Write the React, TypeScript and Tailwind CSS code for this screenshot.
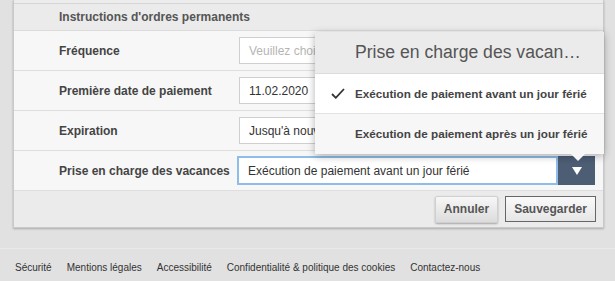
import React from "react";

const rows = [
  { label: "Fréquence", value: "Veuillez choisir", placeholder: true },
  { label: "Première date de paiement", value: "11.02.2020" },
  { label: "Expiration", value: "Jusqu'à nouvel ordre" },
];

const links = [
  "Sécurité",
  "Mentions légales",
  "Accessibilité",
  "Confidentialité & politique des cookies",
  "Contactez-nous",
];

export default function App() {
  return (
    <div className="relative w-[615px] h-[281px] overflow-hidden bg-[#e1e1e1] font-['Liberation_Sans',Arial,sans-serif] text-[#444]">
      <div className="ml-[13px] w-[591px] bg-[#f7f7f7] border-l border-r border-b border-[#c9c9c9] shadow-[0_1px_2px_rgba(0,0,0,0.25)]">
        <div className="h-[4px] bg-[#ececec] border-b border-[#d6d6d6]" />
        <div className="h-[27px] bg-[#ebebeb] border-b border-[#dcdcdc] pl-[45px] flex items-center text-[12px] font-bold text-[#555]">
          Instructions d'ordres permanents
        </div>
        {rows.map((r) => (
          <div
            key={r.label}
            className="h-[40px] border-b border-[#dedede] flex items-center"
          >
            <div className="w-[225px] pl-[45px] text-[12px] font-bold text-[#444]">
              {r.label}
            </div>
            <div
              className={
                "w-[356px] h-[27px] bg-white border border-[#cfcfcf] flex items-center px-[9px] text-[12px] whitespace-nowrap overflow-hidden " +
                (r.placeholder ? "text-[#b5b5b5]" : "text-[#333]")
              }
            >
              {r.value}
            </div>
          </div>
        ))}
        <div className="h-[40px] border-b border-[#dedede] flex items-center">
          <div className="w-[223px] pl-[45px] text-[12px] font-bold text-[#444]">
            Prise en charge des vacances
          </div>
          <div className="flex h-[29px]">
            <div className="w-[321px] h-[29px] bg-white border-2 border-[#8fbdea] flex items-center px-[9px] text-[12px] text-[#333] whitespace-nowrap">
              Exécution de paiement avant un jour férié
            </div>
            <div className="w-[37px] h-[29px] bg-[#4c5d74] flex items-center justify-center">
              <svg width="10" height="8" viewBox="0 0 10 8">
                <path d="M0 0 L10 0 L5 8 Z" fill="#fff" />
              </svg>
            </div>
          </div>
        </div>
        <div className="h-[36px] bg-[#ebebeb] flex items-center justify-end gap-[7px] pr-[7px]">
          <button className="w-[63px] h-[27px] rounded-[2px] border border-[#d0d0d0] bg-gradient-to-b from-[#f7f7f7] to-[#dcdcdc] shadow-[0_1px_2px_rgba(0,0,0,0.3)] text-[12px] font-bold text-[#555]">
            Annuler
          </button>
          <button className="w-[91px] h-[26px] border border-[#666] bg-gradient-to-b from-[#fafafa] to-[#e6e6e6] text-[12px] font-bold text-[#555]">
            Sauvegarder
          </button>
        </div>
      </div>

      <div className="mt-[20px] border-t border-[#e9e9e9] h-[38px] flex items-center gap-[15px] pl-[15px] text-[10px] text-[#333]">
        {links.map((l) => (
          <span key={l}>{l}</span>
        ))}
      </div>

      <div className="absolute left-[315px] top-[32px] w-[289px] bg-white shadow-[0_2px_8px_rgba(0,0,0,0.3)]">
        <div className="h-[42px] bg-[#ebebeb] border-b border-[#dcdcdc] pl-[40px] flex items-center text-[17.6px] text-[#555] whitespace-nowrap">
          Prise en charge des vacan…
        </div>
        <div className="h-[40px] bg-white border-b border-[#e2e2e2] flex items-center text-[11.7px] font-bold text-[#444] whitespace-nowrap">
          <div className="w-[40px] flex justify-center pl-[6px]">
            <svg width="14" height="11" viewBox="0 0 14 11">
              <path
                d="M1 6 L4.8 9.8 L13 1"
                fill="none"
                stroke="#333"
                strokeWidth="1.8"
              />
            </svg>
          </div>
          Exécution de paiement avant un jour férié
        </div>
        <div className="h-[40px] bg-[#f7f7f7] pl-[40px] flex items-center text-[11.7px] font-bold text-[#444] whitespace-nowrap">
          Exécution de paiement après un jour férié
        </div>
        <div className="absolute left-[256px] -bottom-[7px]">
          <svg width="14" height="7" viewBox="0 0 14 7">
            <path d="M0 0 L14 0 L7 7 Z" fill="#f7f7f7" />
          </svg>
        </div>
      </div>
    </div>
  );
}
